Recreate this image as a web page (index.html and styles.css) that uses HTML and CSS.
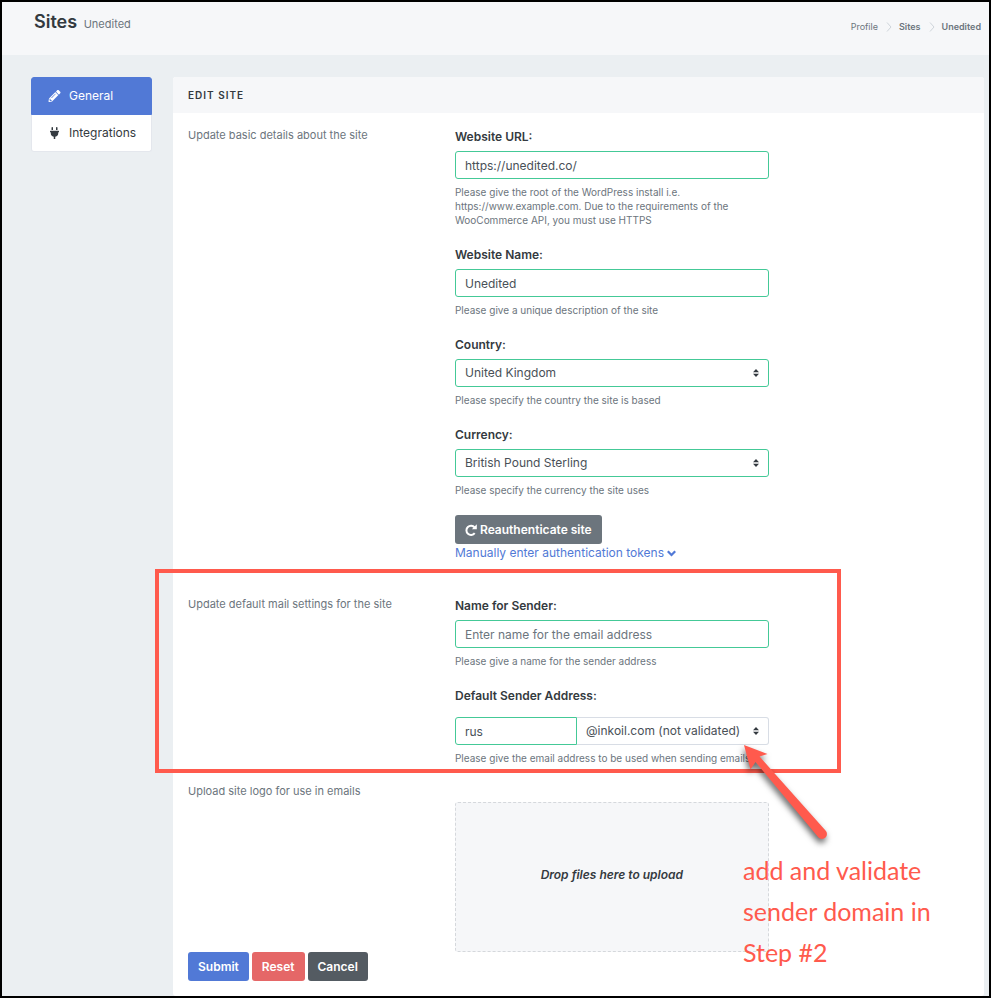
FILE: index.html
```html
<!DOCTYPE html>
<html lang="en">
<head>
<meta charset="utf-8">
<meta name="viewport" content="width=device-width, initial-scale=1">
<title>Sites - Unedited</title>
<link rel="stylesheet" href="styles.css">
</head>
<body>
<header class="hero">
  <h1 class="hero-title">Sites <small>Unedited</small></h1>
  <nav aria-label="Breadcrumb">
    <ol class="breadcrumb">
      <li>Profile</li>
      <li><svg class="crumb-sep" viewBox="0 0 6 10"><path d="M1 .5 5 5 1 9.500"/></svg><a href="#sites">Sites</a></li>
      <li><svg class="crumb-sep" viewBox="0 0 6 10"><path d="M1 .5 5 5 1 9.500"/></svg><a href="#unedited">Unedited</a></li>
    </ol>
  </nav>
</header>
<div class="content">
  <nav class="side" aria-label="Site settings">
    <a class="side-link active" href="#general"><svg class="side-icon" viewBox="0 0 512 512"><path d="M498 142l-46 46c-5 5-12 5-17 0L324 77c-5-5-5-12 0-17l46-46c19-19 49-19 68 0l60 60c19 19 19 49 0 68zm-214-42L22 362 .4 484c-3 16 11 30 28 28l122-22 262-262c5-5 5-12 0-17L301 100c-5-5-13-5-17 0zM124 340c-5-6-5-14 0-20l154-154c6-5 14-5 20 0s5 14 0 20L144 340c-6 5-14 5-20 0zm-36 84h48v36l-64 11-31-31 11-64h36v48z"/></svg>General</a>
    <a class="side-link" href="#integrations"><svg class="side-icon" viewBox="0 0 384 512"><path d="M320 32a32 32 0 0 0-64 0v96h64zm48 128H16a16 16 0 0 0-16 16v32a16 16 0 0 0 16 16h16v32a160 160 0 0 0 128 157v99h64v-99a160 160 0 0 0 128-157v-32h16a16 16 0 0 0 16-16v-32a16 16 0 0 0-16-16zM128 32a32 32 0 0 0-64 0v96h64z"/></svg>Integrations</a>
  </nav>
  <main class="block">
    <h2 class="block-title">Edit Site</h2>
    <form class="block-body">
      <section class="row">
        <p class="intro">Update basic details about the site</p>
        <div class="fields">
          <div class="group">
            <label for="url">Website URL:</label>
            <input class="control" id="url" type="text" value="https://unedited.co/">
            <p class="help">Please give the root of the WordPress install i.e. https://www.example.com. Due to the requirements of the WooCommerce API, you must use HTTPS</p>
          </div>
          <div class="group">
            <label for="name">Website Name:</label>
            <input class="control" id="name" type="text" value="Unedited">
            <p class="help">Please give a unique description of the site</p>
          </div>
          <div class="group">
            <label for="country">Country:</label>
            <div class="select">
              <select class="control" id="country"><option>United Kingdom</option></select>
              <svg class="caret" viewBox="0 0 6 8"><path d="M3 0 0 3.300h6zM3 8 0 4.700h6z"/></svg>
            </div>
            <p class="help">Please specify the country the site is based</p>
          </div>
          <div class="group">
            <label for="currency">Currency:</label>
            <div class="select">
              <select class="control" id="currency"><option>British Pound Sterling</option></select>
              <svg class="caret" viewBox="0 0 6 8"><path d="M3 0 0 3.300h6zM3 8 0 4.700h6z"/></svg>
            </div>
            <p class="help">Please specify the currency the site uses</p>
          </div>
          <button class="btn btn-gray" type="button"><svg class="redo" viewBox="0 0 12 12"><path class="redo-arc" d="M9.600 3.400A4.600 4.600 0 1 0 9.700 9.100"/><path d="M11.800.3v4.900H6.900z"/></svg>Reauthenticate site</button>
          <a class="tokens" href="#tokens">Manually enter authentication tokens <svg class="chevron" viewBox="0 0 8 6"><path d="M.7 1 4 4.300 7.300 1"/></svg></a>
        </div>
      </section>
      <section class="row mail">
        <p class="intro">Update default mail settings for the site</p>
        <div class="fields">
          <div class="group">
            <label for="sender">Name for Sender:</label>
            <input class="control" id="sender" type="text" placeholder="Enter name for the email address">
            <p class="help">Please give a name for the sender address</p>
          </div>
          <div class="group address">
            <label for="address">Default Sender Address:</label>
            <div class="joined">
              <input class="control" id="address" type="text" value="rus">
              <div class="select">
                <select class="control" aria-label="Sender domain"><option>@inkoil.com (not validated)</option></select>
                <svg class="caret" viewBox="0 0 6 8"><path d="M3 0 0 3.300h6zM3 8 0 4.700h6z"/></svg>
              </div>
            </div>
            <p class="help">Please give the email address to be used when sending emails</p>
          </div>
        </div>
        <div class="mark-box"></div>
        <svg class="mark-arrow" viewBox="0 0 100 110"><path d="M4 3 27.500 12 19.500 14.500 85.500 88.500A4.500 4.500 0 0 1 78.500 95.500L15.500 20 10.500 27.500z"/></svg>
        <p class="mark-note">add and validate<br>sender domain in<br>Step #2</p>
      </section>
      <section class="row">
        <p class="intro">Upload site logo for use in emails</p>
        <div class="fields">
          <button class="dropzone" type="button">Drop files here to upload</button>
        </div>
      </section>
      <div class="actions">
        <button class="btn btn-blue" type="submit">Submit</button>
        <button class="btn btn-red" type="reset">Reset</button>
        <button class="btn btn-dark" type="button">Cancel</button>
      </div>
    </form>
  </main>
</div>
</body>
</html>
```
FILE: styles.css
```css
* {
  box-sizing: border-box;
}

body {
  margin: 0;
  min-height: 100vh;
  border: 2px solid #000;
  background: #ebeff2;
  color: #343a40;
  font: 12px/20px Inter, "Liberation Sans", sans-serif;
}

h1, h2, p, ol {
  margin: 0;
}

a {
  color: inherit;
  text-decoration: none;
}

.hero {
  display: flex;
  justify-content: space-between;
  align-items: flex-start;
  padding: 8px 8px 18px 32px;
  background: #f6f7f9;
}

.hero-title {
  font-size: 18px;
  font-weight: 600;
  line-height: 24px;
}

.hero-title small {
  margin-left: 2px;
  color: #6c757d;
  font-size: 11px;
  font-weight: 400;
}

.breadcrumb {
  display: flex;
  padding: 7px 0 0;
  list-style: none;
  color: #6c757d;
  font-size: 9px;
}

.breadcrumb li {
  display: flex;
  align-items: center;
}

.breadcrumb a {
  font-weight: 600;
}

.crumb-sep {
  width: 6px;
  height: 10px;
  margin: 0 7px 0 8px;
  fill: none;
  stroke: #ced4da;
}

.content {
  display: grid;
  grid-template-columns: 121px 1fr;
  gap: 21px;
  align-items: start;
  padding: 22px 5px 0 29px;
}

.side-link {
  display: flex;
  align-items: center;
  height: 37px;
  padding-left: 16px;
  border: 1px solid #e4e7ed;
  border-top: 0;
  border-radius: 0 0 3px 3px;
  background: #fff;
}

.side-link.active {
  height: 38px;
  border: 1px solid #5179d6;
  border-radius: 3px 3px 0 0;
  background: #5179d6;
  color: #fff;
}

.side-icon {
  width: 13px;
  height: 12px;
  margin-right: 8px;
  fill: currentColor;
}

.block {
  border-radius: 3px;
  background: #fff;
}

.block-title {
  padding: 8px 15px;
  border-radius: 3px 3px 0 0;
  background: #f6f7f9;
  font-size: 10px;
  font-weight: 600;
  letter-spacing: 1px;
  text-transform: uppercase;
}

.block-body {
  padding: 14px 15px 15px;
}

.row {
  display: flex;
  margin: 0 -10px;
}

.intro {
  width: 33.333%;
  padding: 0 10px;
  color: #6c757d;
  font-size: 11px;
  line-height: 17px;
}

.fields {
  width: 41.667%;
  padding: 0 10px;
}

.group {
  margin-bottom: 18px;
}

.group label {
  display: block;
  margin-bottom: 4px;
  font-weight: 600;
}

.control {
  display: block;
  width: 100%;
  height: 28px;
  padding: 0 9px;
  border: 1px solid #44c997;
  border-radius: 3px;
  background: #fff;
  color: #495057;
  font: inherit;
  appearance: none;
}

.control::placeholder {
  color: #6c757d;
  opacity: 1;
}

.select {
  position: relative;
}

.caret {
  position: absolute;
  top: 10px;
  right: 10px;
  width: 6px;
  height: 8px;
  fill: #343a40;
  pointer-events: none;
}

.help {
  margin-top: 6px;
  color: #6c757d;
  font-size: 10px;
  line-height: 14px;
}

.btn {
  height: 29px;
  padding: 0 10px;
  border: 0;
  border-radius: 3px;
  color: #fff;
  font: 600 12px/20px Inter, "Liberation Sans", sans-serif;
}

.btn-gray {
  display: flex;
  align-items: center;
  background: #6c757d;
}

.btn-blue {
  background: #5179d6;
}

.btn-red {
  background: #e56767;
}

.btn-dark {
  background: #545b62;
}

.redo {
  width: 12px;
  height: 12px;
  margin-right: 3px;
  fill: #fff;
}

.redo-arc {
  fill: none;
  stroke: #fff;
  stroke-width: 2;
}

.tokens {
  display: block;
  line-height: 18px;
  color: #5179d6;
  white-space: nowrap;
}

.chevron {
  width: 9px;
  height: 7px;
  fill: none;
  stroke: currentColor;
  stroke-width: 2;
}

.mail {
  position: relative;
  margin-top: 34px;
}

.address label {
  margin-bottom: 11px;
}

.joined {
  display: grid;
  grid-template-columns: 122px 1fr;
}

.joined > .control {
  border-radius: 3px 0 0 3px;
}

.joined select {
  border-color: #d8dde5;
  border-left: 0;
  border-radius: 0 3px 3px 0;
}

.dropzone {
  display: block;
  width: 100%;
  height: 150px;
  margin-top: 19px;
  padding: 0 0 5px;
  border: 1px dashed #d5d8dc;
  border-radius: 3px;
  background: #f6f7f9;
  color: #343a40;
  font: italic 600 12px/20px Inter, "Liberation Sans", sans-serif;
}

.actions {
  display: flex;
  gap: 3px;
}

.mark-box {
  position: absolute;
  top: -27px;
  left: -23px;
  width: 686px;
  height: 204px;
  border: 4px solid #ff5a4d;
}

.mark-arrow {
  position: absolute;
  top: 146px;
  left: 562px;
  width: 100px;
  height: 110px;
  fill: #ff5a4d;
  filter: drop-shadow(-1px 4px 3px rgba(0, 0, 0, 0.6));
}

.mark-note {
  position: absolute;
  top: 254px;
  left: 565px;
  color: #ff5a4d;
  font: 25px/41px Lato, "Liberation Sans", sans-serif;
  white-space: nowrap;
}
```
